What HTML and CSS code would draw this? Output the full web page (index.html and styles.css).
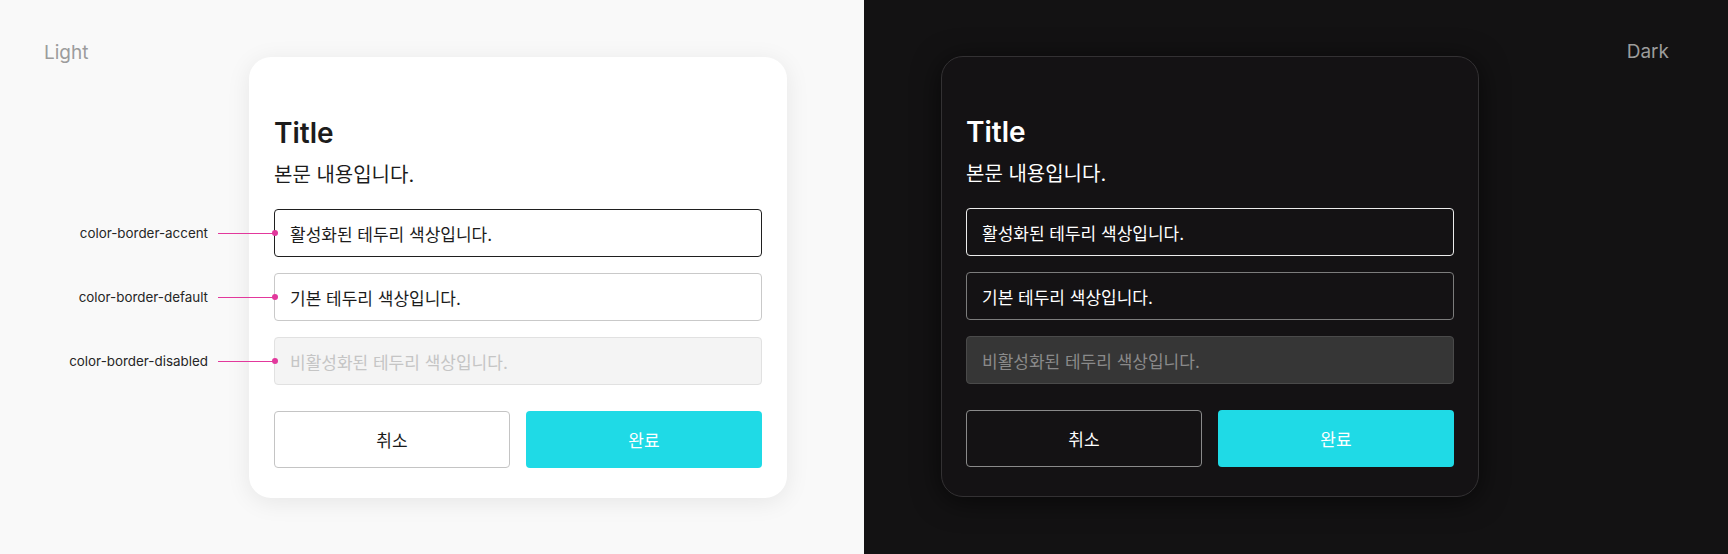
FILE: index.html
```html
<!DOCTYPE html>
<html lang="ko">
<head>
<meta charset="utf-8">
<title>Border colors</title>
<link rel="stylesheet" href="styles.css">
</head>
<body>
<main class="canvas">
  <section class="panel panel-light">
    <div class="mode-label">Light</div>
    <div class="card">
      <h1 class="card-title">Title</h1>
      <p class="card-body">본문 내용입니다.</p>
      <div class="fields">
        <div class="field field-accent">
          <span class="note"><span class="note-text">color-border-accent</span><span class="note-line"></span><span class="note-dot"></span></span>
          활성화된 테두리 색상입니다.
        </div>
        <div class="field field-default">
          <span class="note"><span class="note-text">color-border-default</span><span class="note-line"></span><span class="note-dot"></span></span>
          기본 테두리 색상입니다.
        </div>
        <div class="field field-disabled">
          <span class="note"><span class="note-text">color-border-disabled</span><span class="note-line"></span><span class="note-dot"></span></span>
          비활성화된 테두리 색상입니다.
        </div>
      </div>
      <div class="actions">
        <button class="btn btn-cancel">취소</button>
        <button class="btn btn-done">완료</button>
      </div>
    </div>
  </section>
  <section class="panel panel-dark">
    <div class="card">
      <h1 class="card-title">Title</h1>
      <p class="card-body">본문 내용입니다.</p>
      <div class="fields">
        <div class="field field-accent">활성화된 테두리 색상입니다.</div>
        <div class="field field-default">기본 테두리 색상입니다.</div>
        <div class="field field-disabled">비활성화된 테두리 색상입니다.</div>
      </div>
      <div class="actions">
        <button class="btn btn-cancel">취소</button>
        <button class="btn btn-done">완료</button>
      </div>
    </div>
    <div class="mode-label">Dark</div>
  </section>
</main>
</body>
</html>
```

FILE: styles.css
```css
* { box-sizing: border-box; }

html, body {
  margin: 0;
  padding: 0;
}

body {
  font-family: Inter, "Noto Sans CJK KR", sans-serif;
  width: 1728px;
  height: 554px;
  overflow: hidden;
}

.canvas {
  display: flex;
  width: 1728px;
  height: 554px;
}

.panel {
  width: 864px;
  height: 554px;
  display: flex;
  align-items: flex-start;
}

.panel-light {
  background: #f9f9f9;
  padding: 42px 0 0 44px;
}

.panel-dark {
  background: #131213;
  padding: 41px 59px 0 77px;
  justify-content: space-between;
}

.mode-label {
  font-size: 19px;
  line-height: 22px;
  color: #9c9c9c;
}

.panel-light .mode-label {
  width: 205px;
  flex: none;
}

.card {
  width: 538px;
  height: 441px;
  border-radius: 22px;
  padding: 58px 25px 0 25px;
  display: flex;
  flex-direction: column;
}

.panel-light .card {
  margin-top: 15px;
  background: #ffffff;
  box-shadow: 0 4px 24px rgba(0, 0, 0, 0.08);
  color: #1c1c1c;
}

.panel-dark .card {
  margin-top: 15px;
  background: #141214;
  border: 1px solid #333133;
  padding: 57px 24px 0 24px;
  box-shadow: 0 4px 28px rgba(0, 0, 0, 0.6);
  color: #ffffff;
}

.card-title {
  margin: 0;
  font-size: 28px;
  line-height: 36px;
  font-weight: 600;
}

.card-body {
  margin: 10px 0 0 0;
  font-size: 20px;
  line-height: 28px;
}

.fields {
  margin-top: 20px;
  display: flex;
  flex-direction: column;
  gap: 16px;
}

.field {
  position: relative;
  height: 48px;
  border-radius: 4px;
  border: 1px solid;
  padding: 0 15px;
  display: flex;
  align-items: center;
  font-size: 17px;
}

.panel-light .field-accent { border-color: #1f1f1f; background: #fff; }
.panel-light .field-default { border-color: #c9c9c9; background: #fff; }
.panel-light .field-disabled { border-color: #e1e1e1; background: #f4f4f4; color: #c5c5c5; }

.panel-dark .field-accent { border-color: #ececec; background: #141214; }
.panel-dark .field-default { border-color: #7c7c7c; background: #141214; }
.panel-dark .field-disabled { border-color: #4a4a4a; background: #363636; color: #8a8a8a; }

.note {
  position: absolute;
  right: 100%;
  top: 50%;
  transform: translateY(-50%);
  display: flex;
  align-items: center;
  white-space: nowrap;
}

.note-text {
  font-size: 13.4px;
  color: #262626;
  margin-right: 10px;
}

.note-line {
  width: 57px;
  height: 1px;
  background: #e2389c;
}

.note-dot {
  width: 6px;
  height: 6px;
  border-radius: 50%;
  background: #e2389c;
  margin-right: -3px;
  margin-left: -3px;
}

.actions {
  margin-top: 26px;
  display: flex;
  gap: 16px;
}

.btn {
  flex: 1;
  height: 57px;
  border-radius: 4px;
  font-family: Inter, "Noto Sans CJK KR", sans-serif;
  font-size: 17px;
  border: 1px solid transparent;
  padding: 0;
}

.panel-light .btn-cancel { background: #fff; border-color: #c4c4c4; color: #1a1a1a; }
.panel-dark .btn-cancel { background: #141214; border-color: #8a8a8a; color: #fff; }

.btn-done { background: #1fdae6; color: #ffffff; }
```
